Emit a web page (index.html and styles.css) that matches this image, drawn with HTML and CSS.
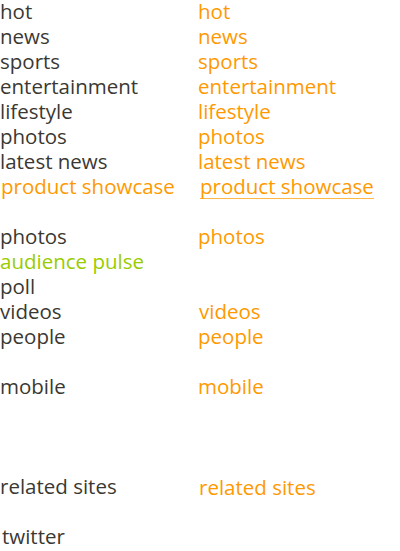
FILE: index.html
```html
<!DOCTYPE html>
<html>
<head>
<meta charset="utf-8">
<link rel="stylesheet" href="styles.css">
</head>
<body>
<div class="page">
  <ul class="menu menu-dark">
    <li>hot</li>
    <li>news</li>
    <li>sports</li>
    <li>entertainment</li>
    <li>lifestyle</li>
    <li>photos</li>
    <li>latest news</li>
    <li class="orange shift1">product showcase</li>
    <li class="blank"></li>
    <li>photos</li>
    <li class="green">audience pulse</li>
    <li>poll</li>
    <li>videos</li>
    <li>people</li>
    <li class="blank"></li>
    <li>mobile</li>
    <li class="blank"></li>
    <li class="blank"></li>
    <li class="blank"></li>
    <li>related sites</li>
    <li class="blank"></li>
    <li class="shift2">twitter</li>
  </ul>
  <ul class="menu menu-orange">
    <li>hot</li>
    <li>news</li>
    <li>sports</li>
    <li>entertainment</li>
    <li>lifestyle</li>
    <li>photos</li>
    <li>latest news</li>
    <li class="shift2"><span class="underlined">product showcase</span></li>
    <li class="blank"></li>
    <li>photos</li>
    <li class="blank"></li>
    <li class="blank"></li>
    <li class="shift1">videos</li>
    <li>people</li>
    <li class="blank"></li>
    <li>mobile</li>
    <li class="blank"></li>
    <li class="blank"></li>
    <li class="blank"></li>
    <li class="shift1 down1">related sites</li>
  </ul>
</div>
</body>
</html>
```

FILE: styles.css
```css
html, body {
  margin: 0;
  padding: 0;
  background: #ffffff;
}

.page {
  display: grid;
  grid-template-columns: 198px 1fr;
  font-family: "Open Sans", sans-serif;
  font-size: 20.5px;
}

.menu {
  list-style: none;
  margin: 0;
  padding: 0;
}

.menu li {
  height: 25px;
  line-height: 22px;
  white-space: nowrap;
  box-sizing: border-box;
}

.menu-dark {
  color: #3b3832;
}

.menu-orange {
  color: #ff9900;
}

.orange {
  color: #ff9900;
}

.green {
  color: #99cc00;
}

.shift1 {
  padding-left: 1px;
}

.shift2 {
  padding-left: 2px;
}

.down1 {
  padding-top: 1px;
}

.underlined {
  display: inline-block;
  vertical-align: top;
  line-height: 22px;
  padding-bottom: 1px;
  border-bottom: 1px solid #ffb846;
}
```
